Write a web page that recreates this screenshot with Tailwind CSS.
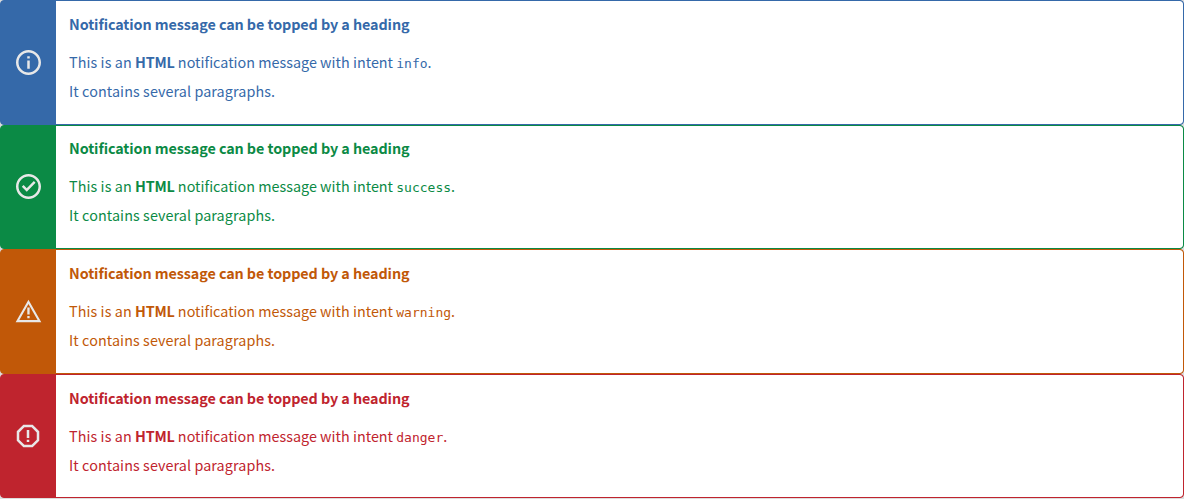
<!DOCTYPE html>
<html lang="en">
<head>
<meta charset="utf-8">
<title>Notifications</title>
<script src="https://cdn.jsdelivr.net/npm/@tailwindcss/browser@4"></script>
</head>
<body class="h-[499px] overflow-hidden bg-[#dddddd] font-['Noto_Sans_CJK_SC',sans-serif] text-[14.35px]">
<main class="flex flex-col">
  <section class="flex h-[124.6px] overflow-hidden rounded border border-[#3569a9] bg-[#3569a9] text-[#3569a9]">
    <div class="flex w-[55px] shrink-0 items-center justify-center pr-px">
      <svg class="size-[30px] text-[#e8e8e8]" viewBox="-0.4 -0.4 24 24" fill="currentColor"><path d="M11 7h2v1.8h-2zm0 3.3h2v6.7h-2zm1-8.3C6.48 2 2 6.48 2 12s4.48 10 10 10 10-4.48 10-10S17.52 2 12 2zm0 18c-4.41 0-8-3.59-8-8s3.59-8 8-8 8 3.59 8 8-3.59 8-8 8z"/></svg>
    </div>
    <div class="grow rounded-r-[3px] bg-white px-[13px] pt-[7.8px]">
      <h2 class="mb-[9px] leading-[29px] font-bold tracking-[-0.08px]">Notification message can be topped by a heading</h2>
      <p class="leading-[29px] tracking-[0.015px]"><span class="tracking-[0.09px]">This is an </span><b class="tracking-[-0.2px]">HTML</b> notification message with intent <code class="font-['DejaVu_Sans_Mono',monospace] text-[13px] leading-none tracking-normal">info</code>.</p>
      <p class="leading-[29px] tracking-[0.09px]">It contains several paragraphs.</p>
    </div>
  </section>
  <section class="flex h-[124.6px] overflow-hidden rounded border border-[#0b8a45] bg-[#0b8a45] text-[#0b8a45]">
    <div class="flex w-[55px] shrink-0 items-center justify-center pr-px">
      <svg class="size-[30px] text-[#e8e8e8]" viewBox="-0.4 0.4 24 24" fill="currentColor"><path d="M12 2C6.48 2 2 6.48 2 12s4.48 10 10 10 10-4.48 10-10S17.52 2 12 2zm0 18c-4.41 0-8-3.59-8-8s3.59-8 8-8 8 3.59 8 8-3.59 8-8 8zM10.6 16.1l7.05-7.05-1.4-1.4-5.65 5.65-2.55-2.55-1.4 1.4z"/></svg>
    </div>
    <div class="grow rounded-r-[3px] bg-white px-[13px] pt-[7.8px]">
      <h2 class="mb-[9px] leading-[29px] font-bold tracking-[-0.08px]">Notification message can be topped by a heading</h2>
      <p class="leading-[29px] tracking-[0.015px]"><span class="tracking-[0.09px]">This is an </span><b class="tracking-[-0.2px]">HTML</b> notification message with intent <code class="font-['DejaVu_Sans_Mono',monospace] text-[13px] leading-none tracking-normal">success</code>.</p>
      <p class="leading-[29px] tracking-[0.09px]">It contains several paragraphs.</p>
    </div>
  </section>
  <section class="flex h-[124.6px] overflow-hidden rounded border border-[#c15808] bg-[#c15808] text-[#c15808]">
    <div class="flex w-[55px] shrink-0 items-center justify-center pr-px">
      <svg class="size-[28px] text-[#e8e8e8]" viewBox="-0.4 -0.6 24 24" fill="currentColor"><path d="M12 5.4 19.83 19.2H4.17L12 5.4M12 1.8 1 21h22L12 1.8zm1 13.9h-2v2h2v-2zm0-7.4h-2v6h2v-6z"/></svg>
    </div>
    <div class="grow rounded-r-[3px] bg-white px-[13px] pt-[7.8px]">
      <h2 class="mb-[9px] leading-[29px] font-bold tracking-[-0.08px]">Notification message can be topped by a heading</h2>
      <p class="leading-[29px] tracking-[0.015px]"><span class="tracking-[0.09px]">This is an </span><b class="tracking-[-0.2px]">HTML</b> notification message with intent <code class="font-['DejaVu_Sans_Mono',monospace] text-[13px] leading-none tracking-normal">warning</code>.</p>
      <p class="leading-[29px] tracking-[0.09px]">It contains several paragraphs.</p>
    </div>
  </section>
  <section class="flex h-[124.6px] overflow-hidden rounded border border-[#bf242e] bg-[#bf242e] text-[#bf242e]">
    <div class="flex w-[55px] shrink-0 items-center justify-center pr-px">
      <svg class="size-[30px] text-[#e8e8e8]" viewBox="0 0 24 24" fill="currentColor"><path d="M15.73 3H8.27L3 8.27v7.46L8.27 21h7.46L21 15.73V8.27L15.73 3zM19 14.9 14.9 19H9.1L5 14.9V9.1L9.1 5h5.8L19 9.1v5.8zM11 7.2h2v6.3h-2zm0 7.7h2v1.9h-2z"/></svg>
    </div>
    <div class="grow rounded-r-[3px] bg-white px-[13px] pt-[7.8px]">
      <h2 class="mb-[9px] leading-[29px] font-bold tracking-[-0.08px]">Notification message can be topped by a heading</h2>
      <p class="leading-[29px] tracking-[0.015px]"><span class="tracking-[0.09px]">This is an </span><b class="tracking-[-0.2px]">HTML</b> notification message with intent <code class="font-['DejaVu_Sans_Mono',monospace] text-[13px] leading-none tracking-normal">danger</code>.</p>
      <p class="leading-[29px] tracking-[0.09px]">It contains several paragraphs.</p>
    </div>
  </section>
</main>
</body>
</html>
